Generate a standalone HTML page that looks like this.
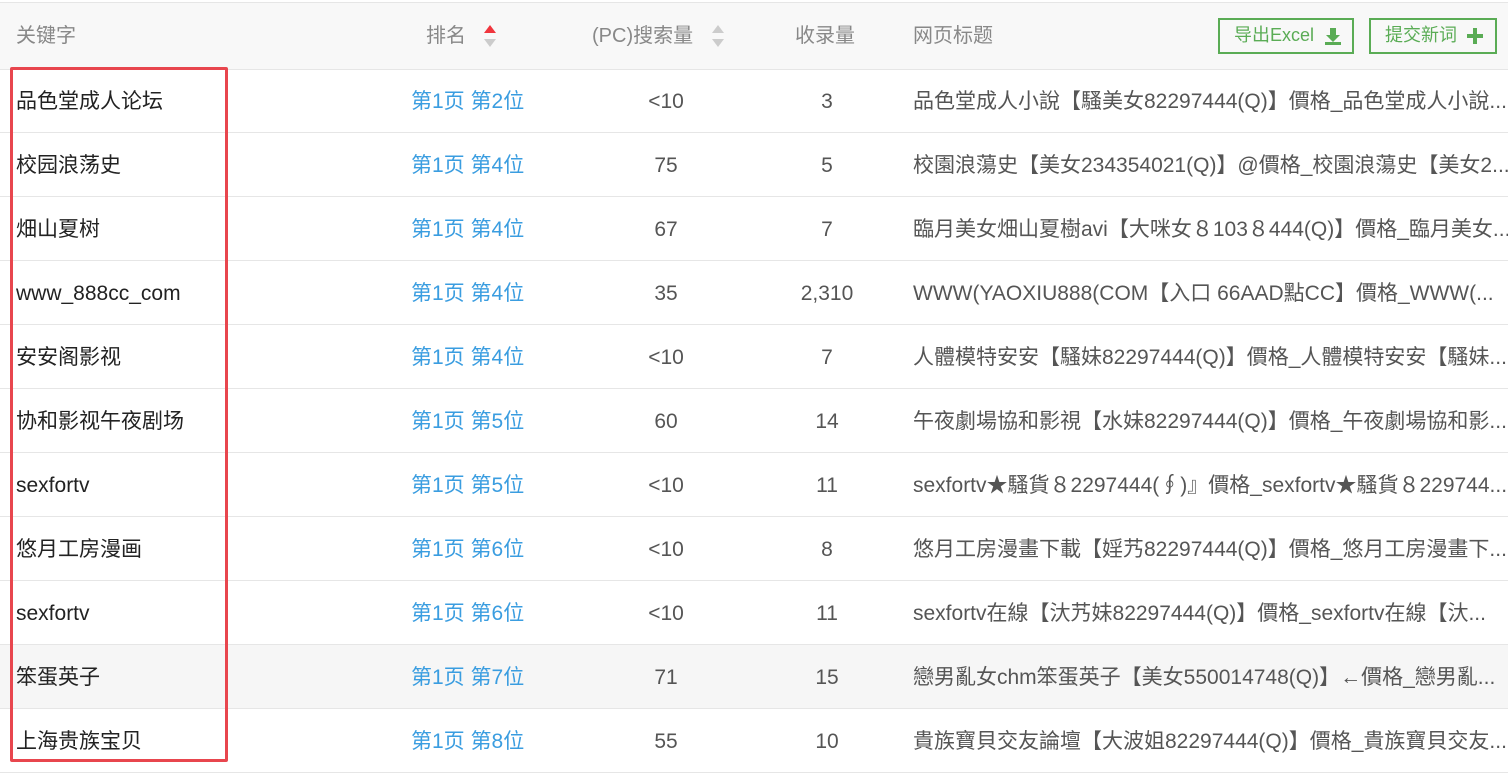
<!DOCTYPE html>
<html><head><meta charset="utf-8"><style>
body{margin:0;width:1508px;height:770px;overflow:hidden;background:#fff;font-family:"Liberation Sans","Noto Sans CJK SC",sans-serif;font-size:21px;color:#333;position:relative}
.hd{position:absolute;left:0;top:2px;width:1508px;height:66px;background:#f8f8f8;border-top:1px solid #e6e6e6;border-bottom:1px solid #e6e6e6;color:#888;font-size:20px}
.hd span{position:absolute;top:21px;line-height:24px}
.row{position:absolute;left:0;width:1508px;height:63px;border-bottom:1px solid #e6e6e6}
.row span{position:absolute;top:21px;line-height:24px;white-space:nowrap}
.k{left:16px;color:#222}
.r{left:411px;color:#3a9de0}
.s{left:616px;width:100px;text-align:center;color:#555}
.c{left:777px;width:100px;text-align:center;color:#555}
.t{left:913px;color:#555}
.btn{position:absolute;top:15px;border:2px solid #5aac55;color:#5aac55;font-size:18px;line-height:31px;box-sizing:border-box;height:36px;padding-left:14px}
.box{position:absolute;left:10px;top:67px;width:212px;height:689px;border:3px solid #e8464e;border-radius:2px}
</style></head><body>
<div class="hd">
<span style="left:16px">关键字</span>
<span style="left:426px">排名</span>
<svg style="position:absolute;left:483px;top:20px" width="14" height="26"><polygon points="7,2 1,10 13,10" fill="#f0353d"/><polygon points="7,24 1,16 13,16" fill="#ccc"/></svg>
<span style="left:592px">(PC)搜索量</span>
<svg style="position:absolute;left:711px;top:20px" width="14" height="26"><polygon points="7,2 1,10 13,10" fill="#ccc"/><polygon points="7,24 1,16 13,16" fill="#ccc"/></svg>
<span style="left:795px">收录量</span>
<span style="left:913px">网页标题</span>
<div class="btn" style="left:1218px;width:136px">导出Excel<svg style="position:absolute;right:10px;top:7px" width="18" height="18"><path d="M6 1h6v7h4l-7 7-7-7h4z" fill="#5aac55"/><rect x="1" y="15" width="16" height="3" fill="#5aac55"/></svg></div>
<div class="btn" style="left:1369px;width:128px">提交新词<svg style="position:absolute;right:12px;top:8px" width="16" height="16"><rect x="6" y="0" width="4" height="16" fill="#5aac55"/><rect x="0" y="6" width="16" height="4" fill="#5aac55"/></svg></div>
</div>
<div class="row" style="top:69px"><span class="k">品色堂成人论坛</span><span class="r">第1页 第2位</span><span class="s">&lt;10</span><span class="c">3</span><span class="t">品色堂成人小說【騷美女82297444(Q)】價格_品色堂成人小說...</span></div>
<div class="row" style="top:133px"><span class="k">校园浪荡史</span><span class="r">第1页 第4位</span><span class="s">75</span><span class="c">5</span><span class="t">校園浪蕩史【美女234354021(Q)】@價格_校園浪蕩史【美女2...</span></div>
<div class="row" style="top:197px"><span class="k">畑山夏树</span><span class="r">第1页 第4位</span><span class="s">67</span><span class="c">7</span><span class="t">臨月美女畑山夏樹avi【大咪女８103８444(Q)】價格_臨月美女...</span></div>
<div class="row" style="top:261px"><span class="k">www_888cc_com</span><span class="r">第1页 第4位</span><span class="s">35</span><span class="c">2,310</span><span class="t">WWW(YAOXIU888(COM【入口 66AAD點CC】價格_WWW(...</span></div>
<div class="row" style="top:325px"><span class="k">安安阁影视</span><span class="r">第1页 第4位</span><span class="s">&lt;10</span><span class="c">7</span><span class="t">人體模特安安【騷妹82297444(Q)】價格_人體模特安安【騷妹...</span></div>
<div class="row" style="top:389px"><span class="k">协和影视午夜剧场</span><span class="r">第1页 第5位</span><span class="s">60</span><span class="c">14</span><span class="t">午夜劇場協和影視【水妹82297444(Q)】價格_午夜劇場協和影...</span></div>
<div class="row" style="top:453px"><span class="k">sexfortv</span><span class="r">第1页 第5位</span><span class="s">&lt;10</span><span class="c">11</span><span class="t">sexfortv★騷貨８2297444(∮)』價格_sexfortv★騷貨８229744...</span></div>
<div class="row" style="top:517px"><span class="k">悠月工房漫画</span><span class="r">第1页 第6位</span><span class="s">&lt;10</span><span class="c">8</span><span class="t">悠月工房漫畫下載【婬艿82297444(Q)】價格_悠月工房漫畫下...</span></div>
<div class="row" style="top:581px"><span class="k">sexfortv</span><span class="r">第1页 第6位</span><span class="s">&lt;10</span><span class="c">11</span><span class="t">sexfortv在線【汏艿妹82297444(Q)】價格_sexfortv在線【汏...</span></div>
<div class="row" style="top:645px;background:#f6f6f6"><span class="k">笨蛋英子</span><span class="r">第1页 第7位</span><span class="s">71</span><span class="c">15</span><span class="t">戀男亂女chm笨蛋英子【美女550014748(Q)】←價格_戀男亂...</span></div>
<div class="row" style="top:709px"><span class="k">上海贵族宝贝</span><span class="r">第1页 第8位</span><span class="s">55</span><span class="c">10</span><span class="t">貴族寶貝交友論壇【大波姐82297444(Q)】價格_貴族寶貝交友...</span></div>
<div class="box"></div>
</body></html>
